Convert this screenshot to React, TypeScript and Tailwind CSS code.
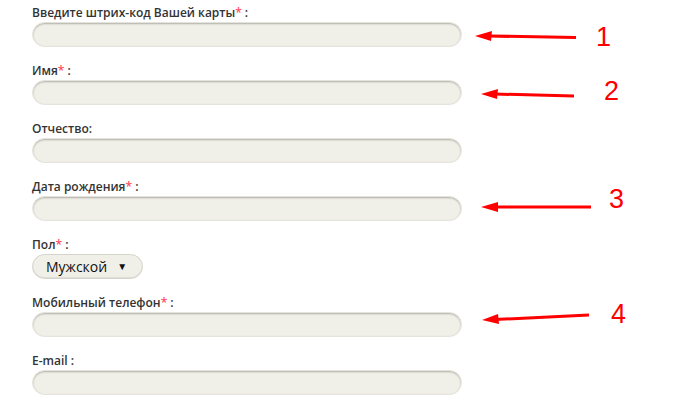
import React from "react";

const Req = () => <span className="text-[#ff4d5e]">*</span>;

function Label({ text, req, colon = " :" }: { text: string; req?: boolean; colon?: string }) {
  return (
    <div className="h-[18px] leading-[18px] text-[12px] font-semibold text-[#333333]">
      {text}
      {req && <Req />}
      {colon}
    </div>
  );
}

function Field({ label, req, colon }: { label: string; req?: boolean; colon?: string }) {
  return (
    <div className="flex flex-col">
      <Label text={label} req={req} colon={colon} />
      <div className="h-[25px] w-[430px] rounded-full bg-[#f0f0e8] shadow-[inset_0_1px_2px_rgba(0,0,0,0.28)] border border-[#e4e4dc]" />
    </div>
  );
}

export default function App() {
  return (
    <div
      className="relative w-[700px] h-[400px] overflow-hidden bg-white"
      style={{ fontFamily: '"Open Sans", "Noto Sans", sans-serif' }}
    >
      <div className="flex flex-col gap-[15px] pl-[32px] pt-[4px]">
        <Field label="Введите штрих-код Вашей карты" req />
        <Field label="Имя" req />
        <Field label="Отчество" colon=":" />
        <Field label="Дата рождения" req />
        <div className="flex flex-col">
          <Label text="Пол" req />
          <div className="h-[25px] w-[111px] rounded-full bg-[#f0f0e8] border border-[#d4d4cc] shadow-[inset_0_-1px_1px_rgba(0,0,0,0.08)] flex items-center pl-[13px] gap-[10px] text-[14px] text-[#111111]">
            <span>Мужской</span>
            <span className="text-[10px]">▼</span>
          </div>
        </div>
        <Field label="Мобильный телефон" req />
        <Field label="E-mail" />
      </div>

      <svg className="absolute left-0 top-0" width="700" height="400" viewBox="0 0 700 400">
        <g stroke="#ff0000" strokeWidth="3" fill="#ff0000">
          <line x1="488" y1="36" x2="576" y2="37.5" />
          <polygon points="475,36 492,31 491,41" stroke="none" />
          <line x1="494" y1="94" x2="574" y2="96" />
          <polygon points="481,94 498,89 497,99" stroke="none" />
          <line x1="494" y1="207" x2="591" y2="207" />
          <polygon points="481,207 498,202 498,212" stroke="none" />
          <line x1="495" y1="319.5" x2="589" y2="315" />
          <polygon points="482,320 498,314 499,324" stroke="none" />
        </g>
        <g fill="#ff0000" fontFamily='"Liberation Sans", Arial, sans-serif' fontSize="27">
          <text x="596" y="46">1</text>
          <text x="604" y="100">2</text>
          <text x="609" y="208">3</text>
          <text x="611" y="323">4</text>
        </g>
      </svg>
    </div>
  );
}
